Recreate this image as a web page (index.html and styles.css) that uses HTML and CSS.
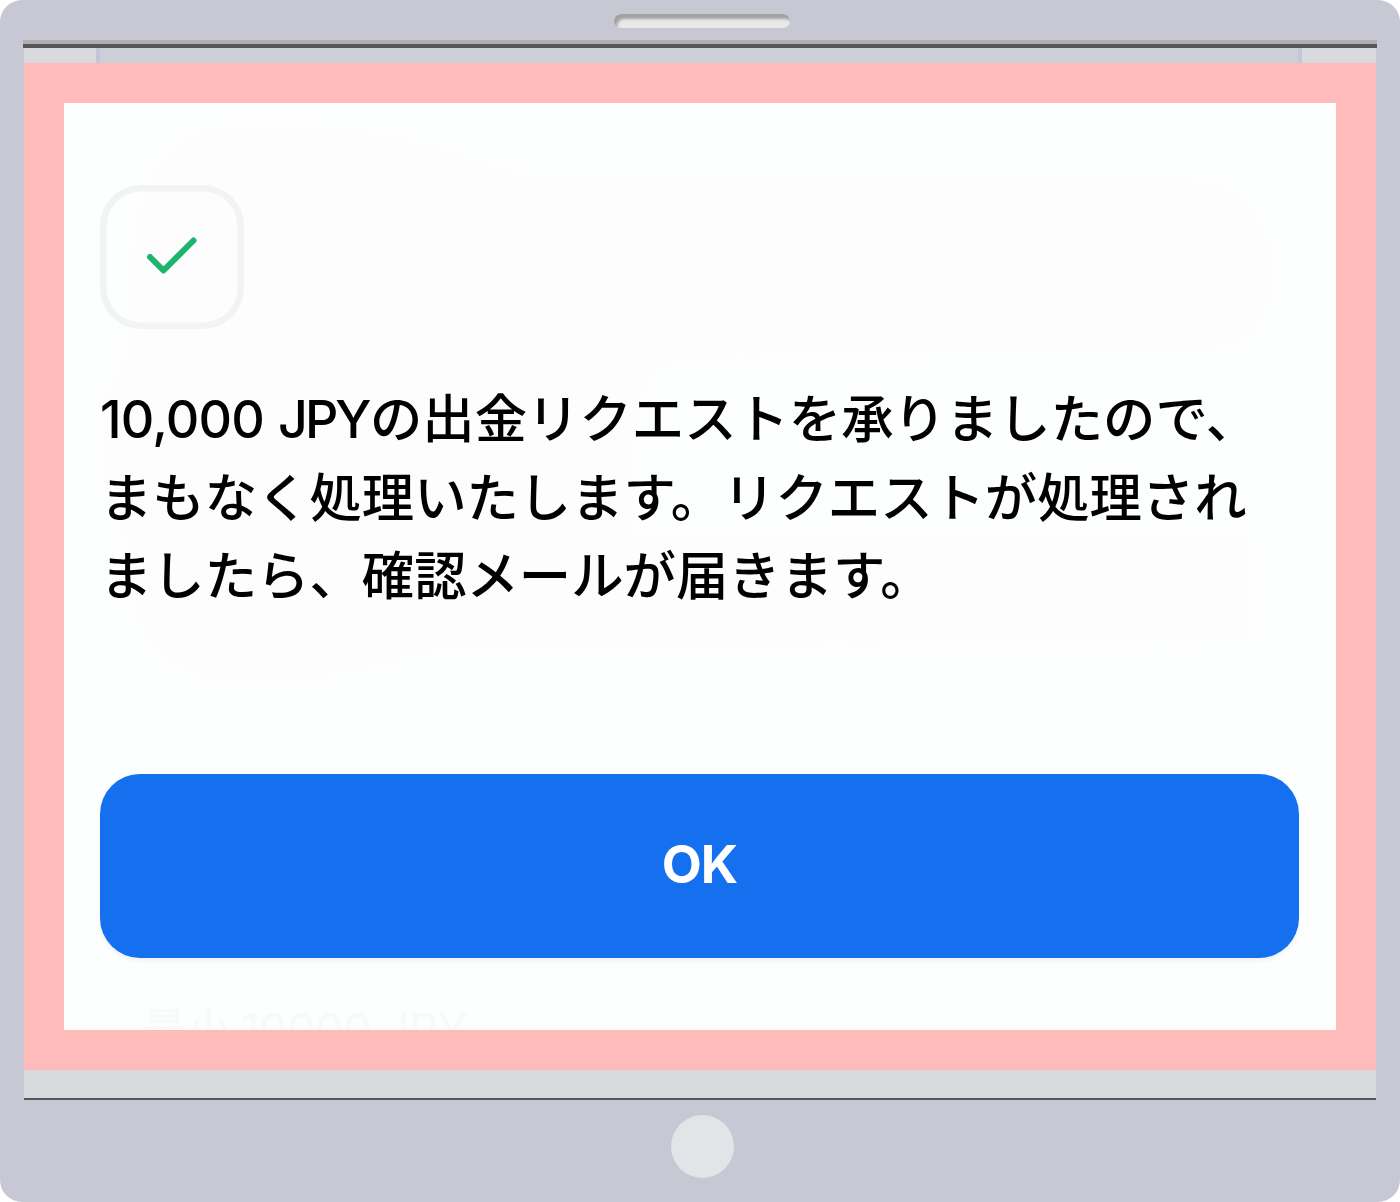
FILE: index.html
```
<!DOCTYPE html>
<html lang="ja">
  <head>
    <meta charset="utf-8">
    <title>出金リクエスト</title>
    <link rel="stylesheet" href="styles.css">
  </head>
  <body>
    <div class="device">
      <div class="device-top">
        <div class="speaker"></div>
      </div>
      <div class="screen-edge"></div>
      <div class="screen">
        <div class="page-strip">
          <div class="page-panel"></div>
        </div>
        <div class="dialog">
          <svg class="backdrop" width="1272" height="927" viewBox="0 0 1272 927">
            <path d="M60 260 C60 60 100 20 190 20 C390 20 400 75 520 75 L1110 75 C1180 75 1208 110 1208 170 C1208 230 1180 249 1120 249 L640 255 C570 260 572 300 570 430 L1188 430 L1188 540 L400 545 C300 560 290 580 190 580 C100 580 60 540 60 440 Q10 320 60 260 Z" fill="#fdfdfd" />
          </svg>
          <div class="status">
            <svg width="144" height="144" viewBox="0 0 144 144">
              <path d="M50 72 L63.5 85.5 L93.5 55.5" fill="none" stroke="#1bb56e" stroke-width="6" stroke-linecap="round" stroke-linejoin="round" />
            </svg>
          </div>
          <p class="message"><span class="latin"><span class="amount">10,000</span><span class="currency">JPY</span></span>の出金リクエストを承りましたので、<br>まもなく処理いたします。リクエストが処理され<br>ましたら、確認メールが届きます。</p>
          <button type="button" class="ok-btn">OK</button>
          <div class="hint">最小 <span class="hint-amount">10000 JPY</span></div>
        </div>
      </div>
      <div class="device-bottom">
        <div class="home-btn"></div>
      </div>
    </div>
  </body>
</html>
```
FILE: styles.css
```
* {
  box-sizing: border-box;
}

body {
  margin: 0;
  background: #fff;
  font-family: Inter, "Noto Sans CJK JP", sans-serif;
}

.device {
  display: flex;
  flex-direction: column;
  width: 1400px;
  height: 1202px;
  border-radius: 22px;
  background: #c8c8d4;
  overflow: hidden;
}

.device-top {
  height: 40px;
  padding-top: 14px;
}

.speaker {
  width: 176px;
  height: 14px;
  margin-left: 614px;
  border-radius: 7px;
  background: #e9e9e9;
  box-shadow: inset 3px 5px 3px #a0a1a1;
}

/* two-tone line over the screen */
.screen-edge {
  height: 8px;
  margin: 0 23px;
  background: #575659;
  border-top: 4px solid #b0b0b4;
}

.screen {
  height: 1052px;
  margin: 0 24px;
  background: #d9dadd;
  border-bottom: 2px solid #575659;
}

.page-strip {
  display: flex;
  justify-content: center;
  height: 15px;
}

.page-panel {
  width: 1206px;
  margin-right: 2px;
  background: #cbcfd8;
  border: solid #c3c6d5;
  border-width: 0 4px;
}

.dialog {
  position: relative;
  z-index: 0;
  height: 1007px;
  padding: 82px 36px 0;
  border: 40px solid #ffbaba;
  background: #fdfefe;
  overflow: hidden;
}

.backdrop {
  position: absolute;
  top: 0;
  left: 0;
  z-index: -1;
}

.status {
  width: 144px;
  height: 144px;
  border-radius: 41px;
  box-shadow: inset 0 0 0 6.5px #f2f3f5;
}

.status svg {
  display: block;
}

.message {
  margin: 47px -10px 0 0;
  color: #000;
  font-family: "Noto Sans CJK JP", sans-serif;
  font-size: 52.37px;
  font-weight: 500;
  line-height: 78.7px;
  white-space: nowrap;
}

.latin {
  display: inline-flex;
  width: 270px;
  gap: 14px;
  font-family: Inter, sans-serif;
  font-size: 52px;
  line-height: 1;
}

.amount {
  letter-spacing: -0.8px;
}

.currency {
  letter-spacing: -3px;
}

.ok-btn {
  display: block;
  width: 1199px;
  height: 184px;
  margin-top: 162px;
  padding: 0 0 4px;
  border: none;
  border-radius: 40px;
  background: #1570f0;
  box-shadow: 0 3px 5px rgba(16, 24, 40, 0.05);
  color: #fff;
  font-family: Inter, sans-serif;
  font-size: 52px;
  font-weight: 700;
  letter-spacing: -1px;
}

/* faded form hint, cut off by the dialog edge */
.hint {
  margin: 39px 0 0 42px;
  color: #f8f9f9;
  font-family: "Noto Sans CJK JP", sans-serif;
  font-size: 44.5px;
  line-height: 60px;
  white-space: nowrap;
}

.hint-amount {
  font-family: Inter, sans-serif;
}

.device-bottom {
  padding: 15px 0 0 671px;
}

.home-btn {
  width: 63px;
  height: 63px;
  border-radius: 50%;
  background: #e3e4e8;
}
```
